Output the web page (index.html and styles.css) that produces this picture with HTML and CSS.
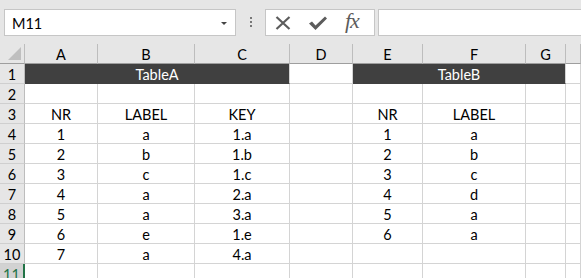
FILE: index.html
```html
<!DOCTYPE html>
<html lang="en">
<head>
    <meta charset="UTF-8">
    <title>Workbook</title>
    <link rel="stylesheet" href="styles.css">
</head>
<body>

    <div class="toolbar">
        <div class="namebox">
            <span>M11</span>
            <span class="arrow"></span>
        </div>
        <div class="grip"><i></i><i></i><i></i></div>
        <div class="fxbox">
            <svg class="icon" width="16" height="14" viewBox="0 0 16 14">
                <path d="M1.5 1 L14.5 13 M14.5 1 L1.5 13" stroke="#5c5c5c" stroke-width="2.2" fill="none"/>
            </svg>
            <svg class="icon" width="20" height="16" viewBox="0 0 20 16">
                <path d="M1 8.5 L4 6.5 L7.5 10.5 L17 1.5 L19 3.5 L7.5 15 Z" fill="#5c5c5c"/>
            </svg>
            <span class="fx">fx</span>
        </div>
        <div class="formula"></div>
    </div>

    <div class="sheet">
        <!-- column headers -->
        <div class="corner"><span class="tri"></span></div>
        <div class="colhead">A</div>
        <div class="colhead">B</div>
        <div class="colhead">C</div>
        <div class="colhead">D</div>
        <div class="colhead">E</div>
        <div class="colhead">F</div>
        <div class="colhead">G</div>
        <div class="colhead"></div>

        <!-- row 1 -->
        <div class="rowhead">1</div>
        <div class="cell title span3">TableA</div>
        <div class="cell"></div>
        <div class="cell title span3">TableB</div>
        <div class="cell"></div>

        <!-- row 2 -->
        <div class="rowhead">2</div>
        <div class="cell"></div><div class="cell"></div><div class="cell"></div><div class="cell"></div>
        <div class="cell"></div><div class="cell"></div><div class="cell"></div><div class="cell"></div>

        <!-- row 3 -->
        <div class="rowhead">3</div>
        <div class="cell">NR</div><div class="cell">LABEL</div><div class="cell">KEY</div><div class="cell"></div>
        <div class="cell">NR</div><div class="cell">LABEL</div><div class="cell"></div><div class="cell"></div>

        <!-- row 4 -->
        <div class="rowhead">4</div>
        <div class="cell">1</div><div class="cell">a</div><div class="cell">1.a</div><div class="cell"></div>
        <div class="cell">1</div><div class="cell">a</div><div class="cell"></div><div class="cell"></div>

        <!-- row 5 -->
        <div class="rowhead">5</div>
        <div class="cell">2</div><div class="cell">b</div><div class="cell">1.b</div><div class="cell"></div>
        <div class="cell">2</div><div class="cell">b</div><div class="cell"></div><div class="cell"></div>

        <!-- row 6 -->
        <div class="rowhead">6</div>
        <div class="cell">3</div><div class="cell">c</div><div class="cell">1.c</div><div class="cell"></div>
        <div class="cell">3</div><div class="cell">c</div><div class="cell"></div><div class="cell"></div>

        <!-- row 7 -->
        <div class="rowhead">7</div>
        <div class="cell">4</div><div class="cell">a</div><div class="cell">2.a</div><div class="cell"></div>
        <div class="cell">4</div><div class="cell">d</div><div class="cell"></div><div class="cell"></div>

        <!-- row 8 -->
        <div class="rowhead">8</div>
        <div class="cell">5</div><div class="cell">a</div><div class="cell">3.a</div><div class="cell"></div>
        <div class="cell">5</div><div class="cell">a</div><div class="cell"></div><div class="cell"></div>

        <!-- row 9 -->
        <div class="rowhead">9</div>
        <div class="cell">6</div><div class="cell">e</div><div class="cell">1.e</div><div class="cell"></div>
        <div class="cell">6</div><div class="cell">a</div><div class="cell"></div><div class="cell"></div>

        <!-- row 10 -->
        <div class="rowhead">10</div>
        <div class="cell">7</div><div class="cell">a</div><div class="cell">4.a</div><div class="cell"></div>
        <div class="cell"></div><div class="cell"></div><div class="cell"></div><div class="cell"></div>

        <!-- row 11 (selected row) -->
        <div class="rowhead selected">11</div>
        <div class="cell"></div><div class="cell"></div><div class="cell"></div><div class="cell"></div>
        <div class="cell"></div><div class="cell"></div><div class="cell"></div><div class="cell"></div>
    </div>

</body>
</html>
```

FILE: styles.css
```css
* {
    box-sizing: border-box;
}
html, body {
    margin: 0;
    height: 100%;
    overflow: hidden;
}
body {
    font-family: Lato, "Liberation Sans", sans-serif;
    font-size: 14.5px;
    color: #000;
    background-color: #fff;
}

/* formula bar */
.toolbar {
    display: flex;
    align-items: flex-start;
    height: 44px;
    padding: 9px 0 0 4px;
    background-color: #e6e6e6;
}
.namebox {
    display: flex;
    align-items: center;
    justify-content: space-between;
    width: 232px;
    height: 27px;
    padding: 1px 8px 0 7px;
    background: #fff;
    border: 1px solid #c6c6c6;
}
.arrow {
    width: 0;
    height: 0;
    border-left: 3px solid transparent;
    border-right: 3px solid transparent;
    border-top: 3px solid #444;
}
.grip {
    display: flex;
    flex-direction: column;
    align-items: center;
    gap: 2px;
    width: 29px;
    padding-top: 8px;
}
.grip i {
    display: block;
    width: 2px;
    height: 2px;
    background: #777;
}
.fxbox {
    display: flex;
    align-items: center;
    width: 110px;
    height: 27px;
    padding-left: 9px;
    background: #fff;
    border: 1px solid #c6c6c6;
}
.fxbox .icon {
    margin-right: 17px;
}
.fxbox .icon + .icon {
    margin-right: 17px;
}
.fx {
    font-family: "Liberation Serif", serif;
    font-style: italic;
    font-size: 22px;
    color: #5c5c5c;
    letter-spacing: -1px;
    margin-top: -3px;
}
.formula {
    flex: 1;
    height: 27px;
    margin-left: 3px;
    background: #fff;
    border: 1px solid #c6c6c6;
    border-right: none;
}

/* sheet grid */
.sheet {
    display: grid;
    grid-template-columns: 25px 73px 97px 95px 63px 70px 103px 40px 1fr;
    grid-auto-rows: 20px;
}
.cell, .colhead, .rowhead, .corner {
    border-right: 1px solid #d4d4d4;
    border-bottom: 1px solid #d4d4d4;
    text-align: center;
    line-height: 18px;
    padding-top: 2px;
    white-space: nowrap;
    overflow: hidden;
}
.colhead, .corner {
    background-color: #e6e6e6;
    border-right-color: #bdbdbd;
    border-bottom-color: #9e9e9e;
}
.corner {
    position: relative;
}
.tri {
    position: absolute;
    right: 3px;
    bottom: 3px;
    width: 0;
    height: 0;
    border-left: 13px solid transparent;
    border-bottom: 13px solid #bfbfbf;
}
.rowhead {
    background-color: #e6e6e6;
    border-right-color: #bdbdbd;
    border-bottom-color: #cfcfcf;
}
.rowhead.selected {
    background-color: #d2d2d2;
    color: #217346;
    border-right: 2px solid #217346;
}
.title {
    background-color: #404040;
    color: #fff;
    border-bottom-color: #404040;
}
.span3 {
    grid-column: span 3;
}
```
